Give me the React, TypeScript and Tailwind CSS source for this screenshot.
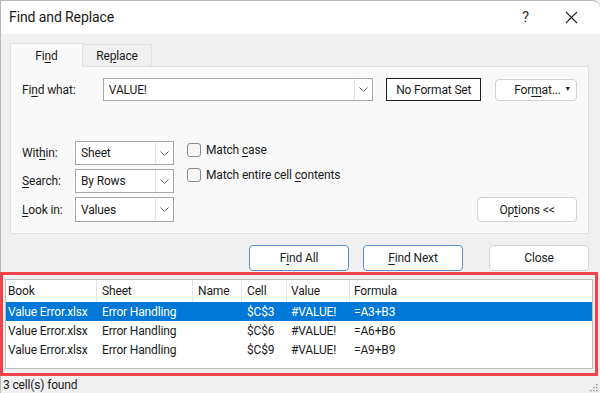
import React from "react";

const font = { fontFamily: 'Roboto, "Noto Sans", sans-serif' };

function U({ children }: { children: React.ReactNode }) {
  return <span className="underline underline-offset-2 decoration-1">{children}</span>;
}

function Chevron() {
  return (
    <svg width="9" height="5" viewBox="0 0 9 5" className="text-[#606060]">
      <polyline points="0.5,0.5 4.5,4.5 8.5,0.5" fill="none" stroke="currentColor" strokeWidth="1" />
    </svg>
  );
}

function Combo({ value }: { value: string }) {
  return (
    <div className="flex h-full w-[99px] items-center border border-[#a8a8a8] bg-white">
      <span className="flex-1 pl-[5px]">{value}</span>
      <div className="flex h-full w-[18px] items-center justify-center border-l border-[#e3e3e3]">
        <Chevron />
      </div>
    </div>
  );
}

function CheckRow({ children }: { children: React.ReactNode }) {
  return (
    <div className="flex items-center gap-[5px]">
      <div className="h-[14px] w-[14px] rounded-[3px] border border-[#8a8a8a] bg-[#f6f6f6]" />
      <span>{children}</span>
    </div>
  );
}

function Btn({ children, primary }: { children: React.ReactNode; primary?: boolean }) {
  return (
    <div
      className={`flex h-[26px] w-[100px] items-center justify-center rounded-[4px] border bg-white ${
        primary ? "border-[#5b8fc9]" : "border-[#d3d3d3]"
      }`}
    >
      {children}
    </div>
  );
}

const rows = [
  { cell: "$C$3", f: "=A3+B3", sel: true },
  { cell: "$C$6", f: "=A6+B6", sel: false },
  { cell: "$C$9", f: "=A9+B9", sel: false },
];

export default function App() {
  return (
    <div
      className="flex h-[393px] w-[600px] flex-col overflow-hidden bg-[#f0f0f0] text-[12px] tracking-[-0.15px] text-[#1b1b1b]"
      style={font}
    >
      {/* title bar */}
      <div className="flex h-[34px] shrink-0 items-center rounded-tr-[8px] border-t border-l border-[#b8b8b8] bg-white">
        <span className="pl-[8px] text-[14px] tracking-[-0.1px] text-[#1a1a1a]">Find and Replace</span>
        <span className="ml-auto mr-[36px] text-[15px] text-[#333]">?</span>
        <svg width="13" height="13" viewBox="0 0 13 13" className="mr-[22px]">
          <path d="M1 1L12 12M12 1L1 12" stroke="#222" strokeWidth="1.1" />
        </svg>
      </div>

      <div className="flex flex-1 flex-col border-l border-[#b8b8b8]">
        {/* tabs */}
        <div className="ml-[9px] mt-[9px] flex h-[23px] items-end">
          <div className="relative z-10 -mb-px flex h-[24px] w-[73px] items-center justify-center border border-b-0 border-[#e2e2e2] bg-[#f9f9f9]">
            Fi<U>n</U>d
          </div>
          <div className="flex h-[22px] w-[69px] items-center justify-center border border-l-0 border-b-0 border-[#e2e2e2] bg-[#f0f0f0]">
            Re<U>p</U>lace
          </div>
        </div>

        {/* panel */}
        <div className="ml-[9px] mr-[11px] flex h-[168px] flex-col border border-[#e2e2e2] bg-[#f9f9f9] px-[11px] pt-[11px]">
          <div className="flex h-[23px] items-center">
            <span className="w-[81px]">Fi<U>n</U>d what:</span>
            <div className="flex h-full w-[271px] items-center border border-[#a8a8a8] bg-white">
              <span className="flex-1 pl-[5px]">VALUE!</span>
              <div className="flex h-full w-[18px] items-center justify-center border-l border-[#e3e3e3]">
                <Chevron />
              </div>
            </div>
            <div className="ml-[13px] flex h-full w-[95px] items-center justify-center border border-[#1e1e1e] bg-white">
              No Format Set
            </div>
            <div className="ml-[14px] flex h-[22px] w-[82px] items-center rounded-[4px] border border-[#d3d3d3] bg-white">
              <span className="ml-[18px]">For<U>m</U>at...</span>
              <span className="ml-auto mr-[5px] text-[7px]">▼</span>
            </div>
          </div>

          <div className="mt-[40px] flex">
            <div className="flex flex-col gap-[4px]">
              <div className="flex h-[24px] items-center">
                <span className="w-[53px]">Wit<U>h</U>in:</span>
                <Combo value="Sheet" />
              </div>
              <div className="flex h-[24px] items-center">
                <span className="w-[53px]"><U>S</U>earch:</span>
                <Combo value="By Rows" />
              </div>
              <div className="flex h-[25px] items-center">
                <span className="w-[53px]"><U>L</U>ook in:</span>
                <Combo value="Values" />
              </div>
            </div>
            <div className="ml-[13px] flex flex-col gap-[7px]">
              <CheckRow>Match <U>c</U>ase</CheckRow>
              <CheckRow>Match entire cell <U>c</U>ontents</CheckRow>
            </div>
            <div className="ml-auto flex items-end">
              <div className="flex h-[25px] w-[100px] items-center justify-center rounded-[4px] border border-[#d3d3d3] bg-white">
                Op<U>t</U>ions &lt;&lt;
              </div>
            </div>
          </div>
        </div>

        {/* buttons */}
        <div className="mt-[11px] flex justify-end pr-[11px]">
          <Btn primary>F<U>i</U>nd All</Btn>
          <div className="ml-[14px]">
            <Btn primary><U>F</U>ind Next</Btn>
          </div>
          <div className="ml-[26px]">
            <Btn>Close</Btn>
          </div>
        </div>

        {/* results */}
        <div className="mt-[1px] -ml-px mr-[2px] flex h-[104px] flex-col border-[3px] border-[#f0434a] px-[2px] pt-[4px] pb-[4px]">
          <div className="flex flex-1 flex-col border border-[#bdbdbd] bg-white">
            <div className="flex h-[22px] items-center">
              <div className="flex h-full w-[91px] items-center border-r border-[#e5e5e5] pl-[2px]">Book</div>
              <div className="flex h-full w-[96px] items-center border-r border-[#e5e5e5] pl-[5px]">Sheet</div>
              <div className="flex h-full w-[49px] items-center border-r border-[#e5e5e5] pl-[5px]">Name</div>
              <div className="flex h-full w-[45px] items-center border-r border-[#e5e5e5] pl-[5px]">Cell</div>
              <div className="flex h-full w-[63px] items-center border-r border-[#e5e5e5] pl-[4px]">Value</div>
              <div className="flex h-full items-center pl-[4px]">Formula</div>
            </div>
            {rows.map((r) => (
              <div
                key={r.cell}
                className={`flex h-[19px] items-center ${r.sel ? "bg-[#0078d7] text-white" : ""}`}
              >
                <div className="w-[91px] pl-[2px]">Value Error.xlsx</div>
                <div className="w-[96px] pl-[5px]">Error Handling</div>
                <div className="w-[49px]" />
                <div className="w-[45px] pl-[5px]">{r.cell}</div>
                <div className="w-[63px] pl-[4px]">#VALUE!</div>
                <div className="pl-[4px]">{r.f}</div>
              </div>
            ))}
          </div>
        </div>

        {/* status */}
        <div className="flex flex-1 items-center">
          <span className="pl-[2px]">3 cell(s) found</span>
          <svg width="10" height="10" viewBox="0 0 10 10" className="ml-auto mr-[2px] mt-[4px]">
            {[
              [8, 2],
              [8, 5],
              [5, 5],
              [8, 8],
              [5, 8],
              [2, 8],
            ].map(([x, y]) => (
              <rect key={`${x}-${y}`} x={x} y={y} width="1.5" height="1.5" fill="#9a9a9a" />
            ))}
          </svg>
        </div>
      </div>
    </div>
  );
}
